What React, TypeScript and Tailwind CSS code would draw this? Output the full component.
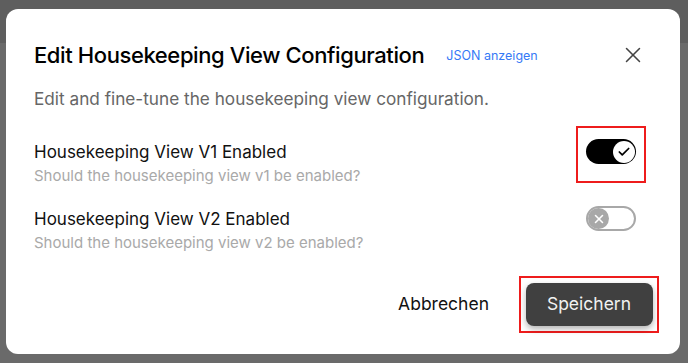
import { X, Check } from "lucide-react";

function Toggle({ on }: { on: boolean }) {
  if (on) {
    return (
      <div className="flex h-[25px] w-[50px] items-center justify-end rounded-full bg-black pr-[1.5px]">
        <div className="flex h-[22px] w-[22px] items-center justify-center rounded-full bg-white">
          <Check className="h-[14px] w-[14px] text-black" strokeWidth={3} />
        </div>
      </div>
    );
  }
  return (
    <div className="flex h-[25px] w-[50px] items-center rounded-full border-2 border-[#a8a8a8] bg-white">
      <div className="flex h-[21px] w-[21px] items-center justify-center rounded-full bg-[#a8a8a8]">
        <X className="h-[14px] w-[14px] text-white" strokeWidth={2.6} />
      </div>
    </div>
  );
}

function SettingRow({ label, hint, on, marked }: { label: string; hint: string; on: boolean; marked?: boolean }) {
  return (
    <div className="flex items-start justify-between">
      <div>
        <div className="text-[17px] leading-[24px] text-[#111]">{label}</div>
        <div className="text-[15px] leading-[24px] text-[#a9a9a9]">{hint}</div>
      </div>
      <div
        className={
          marked
            ? "-mt-[14px] mr-[7px] flex h-[57px] w-[70px] justify-center border-2 border-[#ee1c1c] pt-[11px]"
            : "-mt-[14px] mr-[7px] flex h-[57px] w-[70px] justify-center border-2 border-transparent pt-[11px]"
        }
      >
        <Toggle on={on} />
      </div>
    </div>
  );
}

export default function App() {
  return (
    <div
      className="relative h-[363px] w-[688px] overflow-hidden bg-[#6a6a6a]"
      style={{ fontFamily: "Inter, 'Noto Sans', sans-serif" }}
    >
      <div className="absolute left-0 top-0 h-[43px] w-full bg-[#5e5e5e]" />
      <div className="absolute left-[6px] top-[9px] h-[345px] w-[674px] rounded-[12px] bg-white pl-[28px] pr-[27px]">
        <div className="mt-[32px] flex items-center">
          <h2 className="text-[22px] font-medium leading-[28px] tracking-[-0.4px] text-black">
            Edit Housekeeping View Configuration
          </h2>
          <span className="ml-[22px] mt-[2px] text-[12.5px] text-[#3579f6]">JSON anzeigen</span>
          <X className="ml-auto mr-[7px] h-[26px] w-[26px] text-[#444]" strokeWidth={1.4} />
        </div>
        <p className="mt-[18px] text-[17.2px] leading-[24px] text-[#666]">
          Edit and fine-tune the housekeeping view configuration.
        </p>
        <div className="mt-[29px] flex flex-col gap-[19px]">
          <SettingRow
            label="Housekeeping View V1 Enabled"
            hint="Should the housekeeping view v1 be enabled?"
            on
            marked
          />
          <SettingRow
            label="Housekeeping View V2 Enabled"
            hint="Should the housekeeping view v2 be enabled?"
            on={false}
          />
        </div>
        <div className="mt-[21px] flex items-center justify-end">
          <button className="mr-[30px] text-[17.5px] text-[#111]">Abbrechen</button>
          <div className="mr-[-6px] flex h-[57px] w-[140px] items-center justify-center border-2 border-[#ee1c1c]">
            <button className="h-[43px] w-[127px] rounded-[8px] bg-[#404040] text-[17.5px] text-[#f2f2f2] shadow-[0_3px_6px_rgba(0,0,0,0.3)]">
              Speichern
            </button>
          </div>
        </div>
      </div>
    </div>
  );
}
